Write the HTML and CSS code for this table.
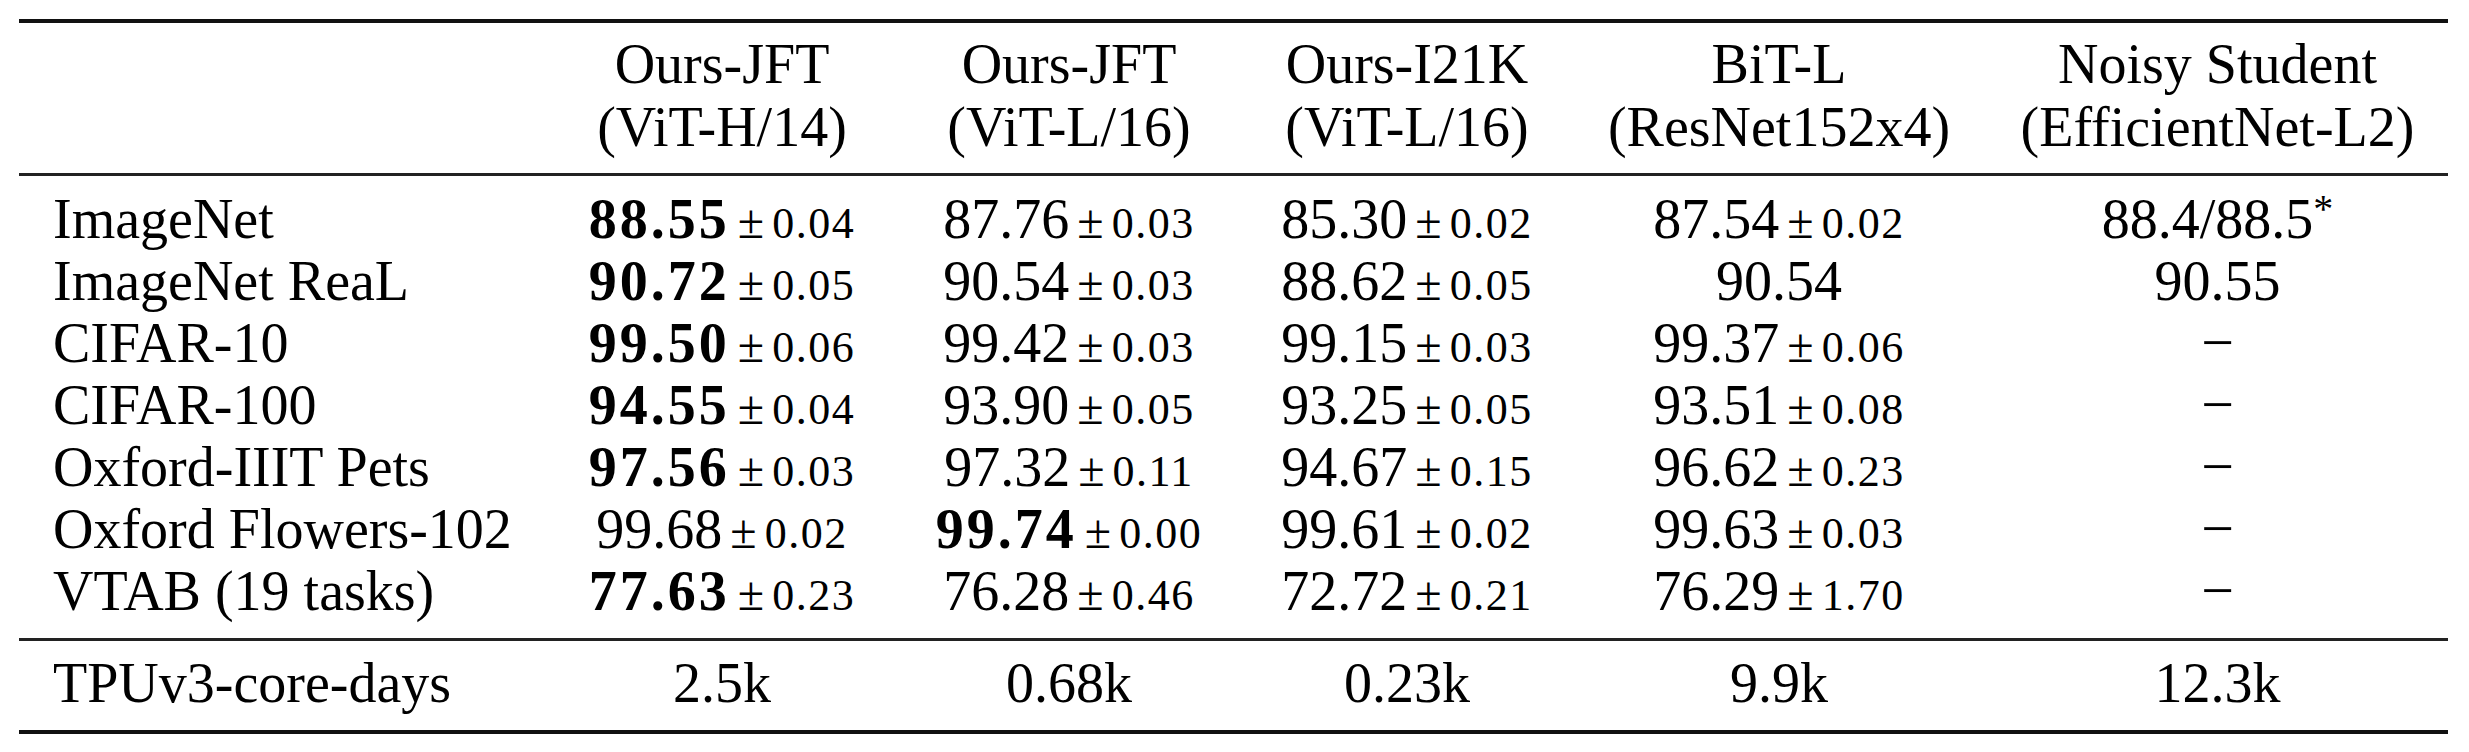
FILE: index.html
```html
<!DOCTYPE html>
<html lang="en">
<head>
<meta charset="utf-8">
<title>Results table</title>
<link rel="stylesheet" href="styles.css">
</head>
<body>
<div class="table">
  <div class="row head">
    <div class="cell label"></div>
    <div class="cell">Ours-JFT<br>(ViT-H/14)</div>
    <div class="cell">Ours-JFT<br>(ViT-L/16)</div>
    <div class="cell">Ours-I21K<br>(ViT-L/16)</div>
    <div class="cell">BiT-L<br>(ResNet152x4)</div>
    <div class="cell">Noisy Student<br>(EfficientNet-L2)</div>
  </div>
  <div class="body">
    <div class="row">
      <div class="cell label">ImageNet</div>
      <div class="cell"><span class="best">88.55</span><span class="pm">±</span><span class="sd">0.04</span></div>
      <div class="cell">87.76<span class="pm">±</span><span class="sd">0.03</span></div>
      <div class="cell">85.30<span class="pm">±</span><span class="sd">0.02</span></div>
      <div class="cell">87.54<span class="pm">±</span><span class="sd">0.02</span></div>
      <div class="cell">88.4/88.5<span class="star">*</span></div>
    </div>
    <div class="row">
      <div class="cell label">ImageNet ReaL</div>
      <div class="cell"><span class="best">90.72</span><span class="pm">±</span><span class="sd">0.05</span></div>
      <div class="cell">90.54<span class="pm">±</span><span class="sd">0.03</span></div>
      <div class="cell">88.62<span class="pm">±</span><span class="sd">0.05</span></div>
      <div class="cell">90.54</div>
      <div class="cell">90.55</div>
    </div>
    <div class="row">
      <div class="cell label">CIFAR-10</div>
      <div class="cell"><span class="best">99.50</span><span class="pm">±</span><span class="sd">0.06</span></div>
      <div class="cell">99.42<span class="pm">±</span><span class="sd">0.03</span></div>
      <div class="cell">99.15<span class="pm">±</span><span class="sd">0.03</span></div>
      <div class="cell">99.37<span class="pm">±</span><span class="sd">0.06</span></div>
      <div class="cell"><span class="dash">−</span></div>
    </div>
    <div class="row">
      <div class="cell label">CIFAR-100</div>
      <div class="cell"><span class="best">94.55</span><span class="pm">±</span><span class="sd">0.04</span></div>
      <div class="cell">93.90<span class="pm">±</span><span class="sd">0.05</span></div>
      <div class="cell">93.25<span class="pm">±</span><span class="sd">0.05</span></div>
      <div class="cell">93.51<span class="pm">±</span><span class="sd">0.08</span></div>
      <div class="cell"><span class="dash">−</span></div>
    </div>
    <div class="row">
      <div class="cell label">Oxford-IIIT Pets</div>
      <div class="cell"><span class="best">97.56</span><span class="pm">±</span><span class="sd">0.03</span></div>
      <div class="cell">97.32<span class="pm">±</span><span class="sd">0.11</span></div>
      <div class="cell">94.67<span class="pm">±</span><span class="sd">0.15</span></div>
      <div class="cell">96.62<span class="pm">±</span><span class="sd">0.23</span></div>
      <div class="cell"><span class="dash">−</span></div>
    </div>
    <div class="row">
      <div class="cell label">Oxford Flowers-102</div>
      <div class="cell">99.68<span class="pm">±</span><span class="sd">0.02</span></div>
      <div class="cell"><span class="best">99.74</span><span class="pm">±</span><span class="sd">0.00</span></div>
      <div class="cell">99.61<span class="pm">±</span><span class="sd">0.02</span></div>
      <div class="cell">99.63<span class="pm">±</span><span class="sd">0.03</span></div>
      <div class="cell"><span class="dash">−</span></div>
    </div>
    <div class="row">
      <div class="cell label">VTAB (19 tasks)</div>
      <div class="cell"><span class="best">77.63</span><span class="pm">±</span><span class="sd">0.23</span></div>
      <div class="cell">76.28<span class="pm">±</span><span class="sd">0.46</span></div>
      <div class="cell">72.72<span class="pm">±</span><span class="sd">0.21</span></div>
      <div class="cell">76.29<span class="pm">±</span><span class="sd">1.70</span></div>
      <div class="cell"><span class="dash">−</span></div>
    </div>
  </div>
  <div class="row foot">
    <div class="cell label">TPUv3-core-days</div>
    <div class="cell">2.5k</div>
    <div class="cell">0.68k</div>
    <div class="cell">0.23k</div>
    <div class="cell">9.9k</div>
    <div class="cell">12.3k</div>
  </div>
</div>
</body>
</html>
```

FILE: styles.css
```css
html, body {
  margin: 0;
  padding: 0;
  background: #ffffff;
}

body {
  font-family: "Liberation Serif", "Times New Roman", serif;
  color: #000000;
}

.table {
  margin: 19px 0 0 19px;
  width: 2429px;
  border-top: 4px solid #111111;
  border-bottom: 4px solid #111111;
}

.row {
  display: grid;
  grid-template-columns: 530px 346px 348px 328px 416px 461px;
  font-size: 56px;
  line-height: 62px;
}

.cell {
  text-align: center;
  white-space: nowrap;
}

.cell.label {
  text-align: left;
  padding-left: 34px;
}

.head {
  padding: 10px 0 14px;
  line-height: 63px;
}

.body {
  border-top: 3px solid #222222;
  padding: 12px 0 16px;
}

.foot {
  border-top: 3px solid #222222;
  padding: 11px 0 16px;
}

.best {
  font-weight: bold;
  letter-spacing: 3px;
}

.pm {
  font-size: 48px;
  line-height: 0;
  margin: 0 8px 0 8px;
}

.sd {
  font-size: 44px;
  line-height: 0;
  letter-spacing: 1.5px;
}

.star {
  font-size: 40px;
  line-height: 0;
  vertical-align: 16px;
}

.dash {
  font-size: 58px;
}
```
